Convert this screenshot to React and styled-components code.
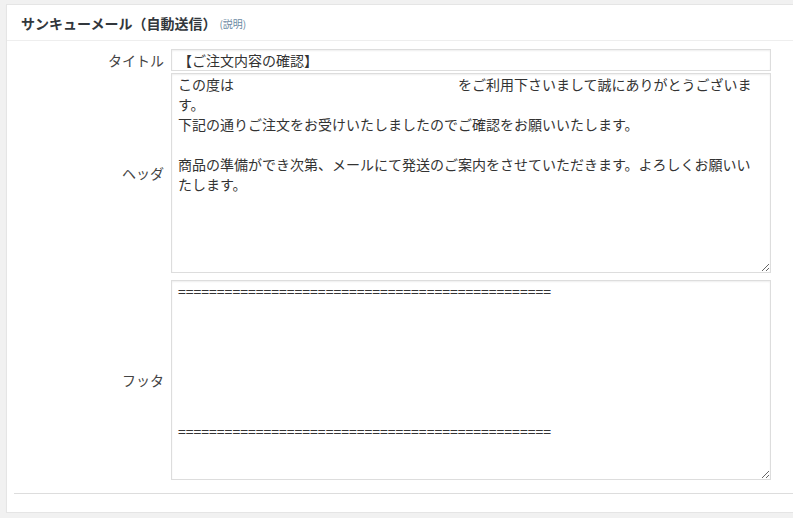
import React from "react";
import styled, { createGlobalStyle } from "styled-components";

const Global = createGlobalStyle`
  html, body { margin: 0; padding: 0; background: #f1f1f1; overflow: hidden; }
  body { font-family: "Noto Sans CJK JP", "Noto Sans", sans-serif; color: #23282d; }
`;

const Page = styled.div`
  padding: 4px 0 0 6px;
  width: 820px;
`;

const Panel = styled.section`
  background: #fff;
  border: 1px solid #e5e5e5;
  box-shadow: 0 1px 1px rgba(0, 0, 0, 0.04);
`;

const Header = styled.h3`
  margin: 0;
  height: 35px;
  padding: 0 14px;
  display: flex;
  align-items: center;
  border-bottom: 1px solid #eee;
  font-size: 14px;
  font-weight: 700;
  color: #32373c;
  line-height: 1;
`;

const HelpLink = styled.span`
  font-size: 10px;
  font-weight: 400;
  color: #6b8aa3;
  margin-left: 3px;
  margin-top: 2px;
`;

const Inside = styled.div`
  padding: 8px 0 18px 7px;
`;

const Form = styled.div`
  display: grid;
  grid-template-columns: 150px 600px;
  column-gap: 7px;
  align-items: center;
`;

const Label = styled.label`
  text-align: right;
  font-size: 14px;
  color: #444;
  margin-top: ${(p) => p.$top || 0}px;
`;

const fieldBase = `
  box-sizing: border-box;
  width: 600px;
  border: 1px solid #ddd;
  box-shadow: inset 0 1px 2px rgba(0,0,0,0.07);
  background: #fff;
  color: #333;
  font-family: "Noto Sans CJK JP", "Noto Sans", sans-serif;
  font-size: 14px;
  outline: none;
  margin: 0;
`;

const TextInput = styled.input`
  ${fieldBase}
  height: 22px;
  padding: 0 6px;
  line-height: 20px;
`;

const TextArea = styled.textarea`
  ${fieldBase}
  display: block;
  height: 200px;
  padding: 0 6px;
  line-height: 20px;
  resize: both;
  overflow: hidden;
  margin-top: ${(p) => p.$top || 0}px;
`;

const Divider = styled.hr`
  border: 0;
  border-top: 1px solid #ddd;
  margin: 13px 0 0 0;
`;

const sp = "\u3000".repeat(16);
const headerText =
  "この度は" + sp + "をご利用下さいまして誠にありがとうございます。\n" +
  "下記の通りご注文をお受けいたしましたのでご確認をお願いいたします。\n\n" +
  "商品の準備ができ次第、メールにて発送のご案内をさせていただきます。よろしくお願いいたします。";

const eq = "=".repeat(48);
const footerText = eq + "\n\n\n\n\n\n\n" + eq;

export default function App() {
  return (
    <>
      <Global />
      <Page>
        <Panel>
          <Header>
            サンキューメール（自動送信）<HelpLink>(説明)</HelpLink>
          </Header>
          <Inside>
            <Form>
              <Label>タイトル</Label>
              <TextInput defaultValue="【ご注文内容の確認】" />
              <Label $top={2}>ヘッダ</Label>
              <TextArea $top={2} defaultValue={headerText} spellCheck={false} />
              <Label $top={7}>フッタ</Label>
              <TextArea $top={7} defaultValue={footerText} spellCheck={false} />
            </Form>
            <Divider />
          </Inside>
        </Panel>
      </Page>
    </>
  );
}
